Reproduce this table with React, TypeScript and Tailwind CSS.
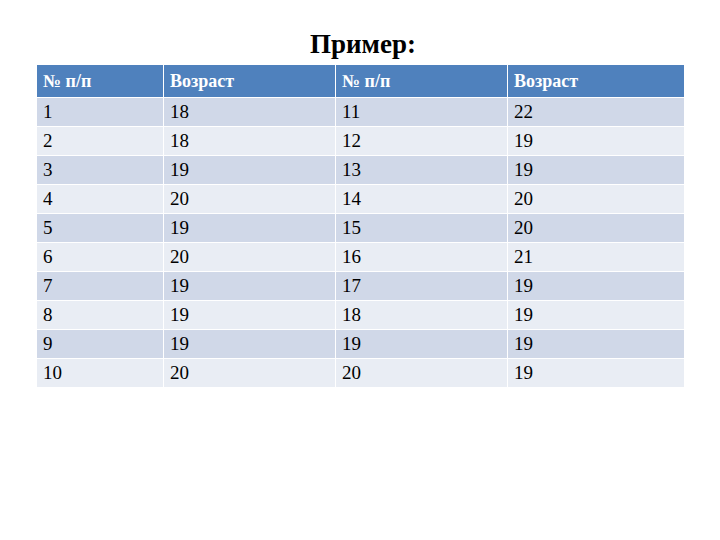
const rows: [string, string, string, string][] = [
  ['1', '18', '11', '22'],
  ['2', '18', '12', '19'],
  ['3', '19', '13', '19'],
  ['4', '20', '14', '20'],
  ['5', '19', '15', '20'],
  ['6', '20', '16', '21'],
  ['7', '19', '17', '19'],
  ['8', '19', '18', '19'],
  ['9', '19', '19', '19'],
  ['10', '20', '20', '19'],
];

const headers = ['№ п/п', 'Возраст', '№ п/п', 'Возраст'];

export default function App() {
  return (
    <div className="w-[720px] h-[540px] bg-white overflow-hidden font-[family-name:'Liberation_Serif',serif] text-black">
      <h1 className="pt-[28px] h-[65px] text-center text-[27px] font-bold leading-[32px] pl-[6px]">
        Пример:
      </h1>
      <div className="px-[36px]">
        <table className="w-[648px] table-fixed border-collapse font-[family-name:'Liberation_Serif',serif]">
          <colgroup>
            <col className="w-[127px]" />
            <col className="w-[172px]" />
            <col className="w-[172px]" />
            <col className="w-[177px]" />
          </colgroup>
          <thead>
            <tr className="h-[32px] bg-[#4f81bd]">
              {headers.map((h, i) => (
                <th
                  key={i}
                  className="border border-white border-t-0 px-[6px] text-left text-[18px] font-bold leading-none text-white"
                >
                  {h}
                </th>
              ))}
            </tr>
          </thead>
          <tbody>
            {rows.map((r, i) => (
              <tr key={i} className={`h-[29px] ${i % 2 === 0 ? 'bg-[#d0d8e8]' : 'bg-[#e9edf4]'}`}>
                {r.map((c, j) => (
                  <td key={j} className="border border-white px-[6px] text-[19px] leading-none">
                    {c}
                  </td>
                ))}
              </tr>
            ))}
          </tbody>
        </table>
      </div>
    </div>
  );
}
